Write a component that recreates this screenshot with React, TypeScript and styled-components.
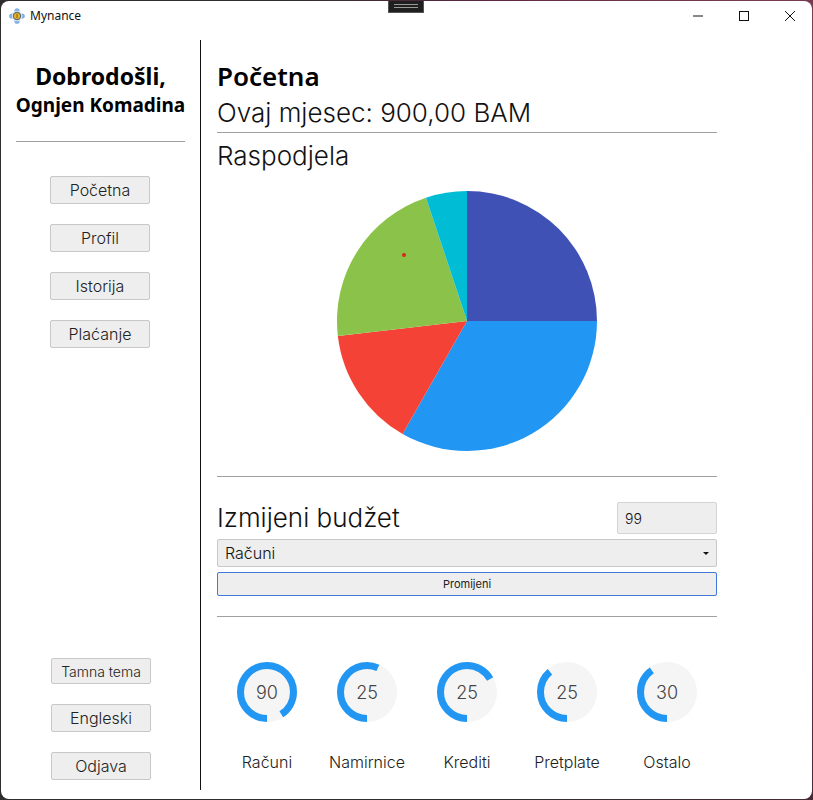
import React from 'react';
import styled, { createGlobalStyle } from 'styled-components';

const budgets = [
  { label: 'Računi', value: 90, sweep: 0.903 },
  { label: 'Namirnice', value: 25, sweep: 0.564 },
  { label: 'Krediti', value: 25, sweep: 0.664 },
  { label: 'Pretplate', value: 25, sweep: 0.386 },
  { label: 'Ostalo', value: 30, sweep: 0.4 },
];

const slices = [
  { color: '#3f51b5', from: 0, to: 90 },
  { color: '#2196f3', from: 90, to: 209.7 },
  { color: '#f44336', from: 209.7, to: 263.4 },
  { color: '#8bc34a', from: 263.4, to: 341.6 },
  { color: '#00bcd4', from: 341.6, to: 360 },
];

const slicePath = (from: number, to: number) => {
  const r = 130;
  const point = (deg: number) => {
    const rad = (deg * Math.PI) / 180;
    return `${(r + r * Math.sin(rad)).toFixed(2)} ${(r - r * Math.cos(rad)).toFixed(2)}`;
  };
  const large = to - from > 180 ? 1 : 0;
  return `M${r} ${r} L${point(from)} A${r} ${r} 0 ${large} 1 ${point(to)} Z`;
};

const Ring = ({ value, sweep }: { value: number; sweep: number }) => {
  const r = 26.5;
  const length = 2 * Math.PI * r;
  return (
    <RingBox>
      <svg width="60" height="60" viewBox="0 0 60 60">
        <circle cx="30" cy="30" r="30" fill="#f5f5f5" />
        <circle
          cx="30"
          cy="30"
          r={r}
          fill="none"
          stroke="#2196f3"
          strokeWidth="7"
          strokeDasharray={`${length * sweep} ${length}`}
          transform="rotate(90 30 30)"
        />
      </svg>
      <RingValue>{value}</RingValue>
    </RingBox>
  );
};

const App = () => {
  return (
    <Window>
      <GlobalStyle />
      <TitleBar>
        <AppIcon width="16" height="16" viewBox="0 0 16 16">
          <circle cx="8" cy="2.8" r="2.6" fill="#7fb2e0" />
          <circle cx="8" cy="13.2" r="2.6" fill="#7fb2e0" />
          <circle cx="2.8" cy="8" r="2.6" fill="#7fb2e0" />
          <circle cx="13.2" cy="8" r="2.6" fill="#7fb2e0" />
          <circle cx="8" cy="8" r="5.2" fill="#dfe9f2" />
          <circle cx="8" cy="8" r="4.2" fill="#5f6f7c" />
          <circle cx="8" cy="8" r="3" fill="#e8b320" />
          <path d="M8 6v4" stroke="#8a5a10" strokeWidth="1" />
        </AppIcon>
        <AppName>Mynance</AppName>
        <WindowControls>
          <ControlButton>
            <svg width="10" height="10" viewBox="0 0 10 10">
              <path d="M0 5h10" stroke="#111" strokeWidth="1" />
            </svg>
          </ControlButton>
          <ControlButton>
            <svg width="10" height="10" viewBox="0 0 10 10">
              <rect x="0.5" y="0.5" width="9" height="9" fill="none" stroke="#111" strokeWidth="1" />
            </svg>
          </ControlButton>
          <ControlButton>
            <svg width="10" height="10" viewBox="0 0 10 10">
              <path d="M0 0l10 10M10 0L0 10" stroke="#111" strokeWidth="1" />
            </svg>
          </ControlButton>
        </WindowControls>
        <DebugHandle>
          <DebugLine />
          <DebugLine />
        </DebugHandle>
      </TitleBar>
      <Body>
        <Sidebar>
          <Welcome>Dobrodošli,</Welcome>
          <UserName>Ognjen Komadina</UserName>
          <SideDivider />
          <NavList>
            <NavButton>Početna</NavButton>
            <NavButton>Profil</NavButton>
            <NavButton>Istorija</NavButton>
            <NavButton>Plaćanje</NavButton>
          </NavList>
          <BottomList>
            <BottomButton $small>Tamna tema</BottomButton>
            <BottomButton>Engleski</BottomButton>
            <BottomButton>Odjava</BottomButton>
          </BottomList>
        </Sidebar>
        <Main>
          <PageTitle>Početna</PageTitle>
          <Heading>Ovaj mjesec: 900,00 BAM</Heading>
          <Divider />
          <SectionHeading>Raspodjela</SectionHeading>
          <PieWrap>
            <svg width="260" height="260" viewBox="0 0 260 260">
              {slices.map((slice) => (
                <path key={slice.color} d={slicePath(slice.from, slice.to)} fill={slice.color} />
              ))}
            </svg>
            <PieDot />
          </PieWrap>
          <Divider />
          <BudgetRow>
            <Heading>Izmijeni budžet</Heading>
            <AmountInput defaultValue="99" />
          </BudgetRow>
          <CategorySelect>
            <span>Računi</span>
            <Caret />
          </CategorySelect>
          <SubmitButton>Promijeni</SubmitButton>
          <LowerDivider />
          <RingRow>
            {budgets.map((item) => (
              <RingItem key={item.label}>
                <Ring value={item.value} sweep={item.sweep} />
                <RingLabel>{item.label}</RingLabel>
              </RingItem>
            ))}
          </RingRow>
        </Main>
      </Body>
    </Window>
  );
};

export default App;

const GlobalStyle = createGlobalStyle`
  html, body {
    margin: 0;
    padding: 0;
    background: radial-gradient(circle at 100% 35%, #a85f70 0, #5a2740 45%, #2e2e2e 62%);
    min-height: 800px;
  }

  body {
    font-family: Inter, "Liberation Sans", sans-serif;
    color: #111;
  }

  button, input {
    font-family: inherit;
  }
`;

const Window = styled.div`
  box-sizing: border-box;
  width: 811px;
  height: 798px;
  margin: 1px 0 0 1px;
  background: #fff;
  border-radius: 8px;
  overflow: hidden;
`;

const TitleBar = styled.div`
  position: relative;
  display: flex;
  align-items: center;
  height: 39px;
  padding: 0 0 10px 8px;
  box-sizing: border-box;
`;

const AppIcon = styled.svg`
  flex: none;
`;

const AppName = styled.span`
  margin-left: 5px;
  font-family: "Noto Sans", sans-serif;
  font-size: 12px;
  color: #111;
`;

const WindowControls = styled.div`
  display: flex;
  margin-left: auto;
  margin-right: -1px;
`;

const ControlButton = styled.div`
  display: flex;
  align-items: center;
  justify-content: center;
  width: 46px;
  height: 30px;
`;

const DebugHandle = styled.div`
  position: absolute;
  top: -1px;
  left: 387px;
  display: flex;
  flex-direction: column;
  align-items: center;
  justify-content: center;
  gap: 2px;
  box-sizing: border-box;
  width: 36px;
  height: 13px;
  background: #1f1f1f;
  border: 1px solid #555;
  border-top: none;
`;

const DebugLine = styled.div`
  width: 24px;
  height: 1px;
  background: #9a9a9a;
`;

const Body = styled.div`
  display: flex;
  height: 750px;
`;

const Sidebar = styled.aside`
  display: flex;
  flex-direction: column;
  align-items: center;
  box-sizing: border-box;
  flex: none;
  width: 200px;
  padding-top: 21px;
  border-right: 1px solid #111;
`;

const Welcome = styled.div`
  font-family: "Noto Sans", sans-serif;
  font-size: 23px;
  font-weight: 700;
  line-height: 30px;
  color: #000;
`;

const UserName = styled.div`
  margin-top: 2px;
  font-family: "Noto Sans", sans-serif;
  font-size: 19px;
  font-weight: 700;
  line-height: 24px;
  color: #000;
`;

const SideDivider = styled.hr`
  align-self: flex-start;
  width: 169px;
  height: 1px;
  margin: 24px 0 34px 15px;
  border: none;
  background: #a0a0a0;
`;

const NavList = styled.nav`
  display: flex;
  flex-direction: column;
  gap: 20px;
  margin-right: 1px;
`;

const ButtonBase = styled.button`
  display: flex;
  align-items: center;
  justify-content: center;
  padding: 0;
  background: #eeeeee;
  border: 1px solid #c8c8c8;
  border-radius: 2px;
  color: #222;
`;

const NavButton = styled(ButtonBase)`
  width: 100px;
  height: 28px;
  font-size: 16px;
  font-weight: 300;
`;

const BottomList = styled.div`
  display: flex;
  flex-direction: column;
  gap: 20px;
  margin-top: auto;
  margin-left: 1px;
  margin-bottom: 10px;
`;

const BottomButton = styled(ButtonBase)<{ $small?: boolean }>`
  width: 100px;
  height: 28px;
  font-size: ${(props) => (props.$small ? '14px' : '16px')};
  font-weight: 300;

  &:first-child {
    height: 26px;
  }
`;

const Main = styled.main`
  display: flex;
  flex-direction: column;
  width: 500px;
  margin-left: 16px;
`;

const PageTitle = styled.h1`
  margin: 18px 0 0;
  font-family: "Noto Sans", sans-serif;
  font-size: 26px;
  font-weight: 600;
  line-height: 36px;
  color: #000;
`;

const Heading = styled.div`
  font-size: 26px;
  font-weight: 300;
  line-height: 38px;
  color: #111;
`;

const SectionHeading = styled(Heading)`
  margin-top: 4px;
`;

const Divider = styled.hr`
  flex: none;
  width: 100%;
  height: 1px;
  margin: 0;
  border: none;
  background: #a0a0a0;
`;

const PieWrap = styled.div`
  position: relative;
  align-self: center;
  width: 260px;
  height: 260px;
  margin: 16px 0 25px;
`;

const PieDot = styled.div`
  position: absolute;
  top: 62px;
  left: 65px;
  width: 4px;
  height: 4px;
  border-radius: 50%;
  background: #d9281e;
`;

const BudgetRow = styled.div`
  display: flex;
  align-items: center;
  justify-content: space-between;
  margin-top: 22px;
`;

const AmountInput = styled.input`
  box-sizing: border-box;
  width: 100px;
  height: 32px;
  padding: 0 7px;
  background: #eeeeee;
  border: 1px solid #d4d4d4;
  border-radius: 2px;
  font-size: 14px;
  font-weight: 300;
  color: #111;
  outline: none;
`;

const CategorySelect = styled.div`
  display: flex;
  align-items: center;
  justify-content: space-between;
  box-sizing: border-box;
  height: 28px;
  margin-top: 2px;
  padding: 0 8px 0 7px;
  background: #eeeeee;
  border: 1px solid #c8c8c8;
  border-radius: 2px;
  font-size: 16px;
  font-weight: 300;
`;

const Caret = styled.span`
  width: 0;
  height: 0;
  margin-right: -1px;
  border-left: 3px solid transparent;
  border-right: 3px solid transparent;
  border-top: 3px solid #111;
`;

const SubmitButton = styled(ButtonBase)`
  height: 24px;
  margin-top: 5px;
  border-color: #3f7ad9;
  font-size: 11px;
  font-weight: 400;
`;

const LowerDivider = styled(Divider)`
  margin-top: 20px;
`;

const RingRow = styled.div`
  display: flex;
  margin-top: 45px;
`;

const RingItem = styled.div`
  display: flex;
  flex-direction: column;
  align-items: center;
  width: 100px;
`;

const RingBox = styled.div`
  position: relative;
  width: 60px;
  height: 60px;
`;

const RingValue = styled.div`
  position: absolute;
  inset: 0;
  display: flex;
  align-items: center;
  justify-content: center;
  font-size: 18px;
  font-weight: 300;
  color: #444;
`;

const RingLabel = styled.div`
  margin-top: 30px;
  font-size: 16px;
  font-weight: 300;
  line-height: 20px;
  color: #222;
`;
